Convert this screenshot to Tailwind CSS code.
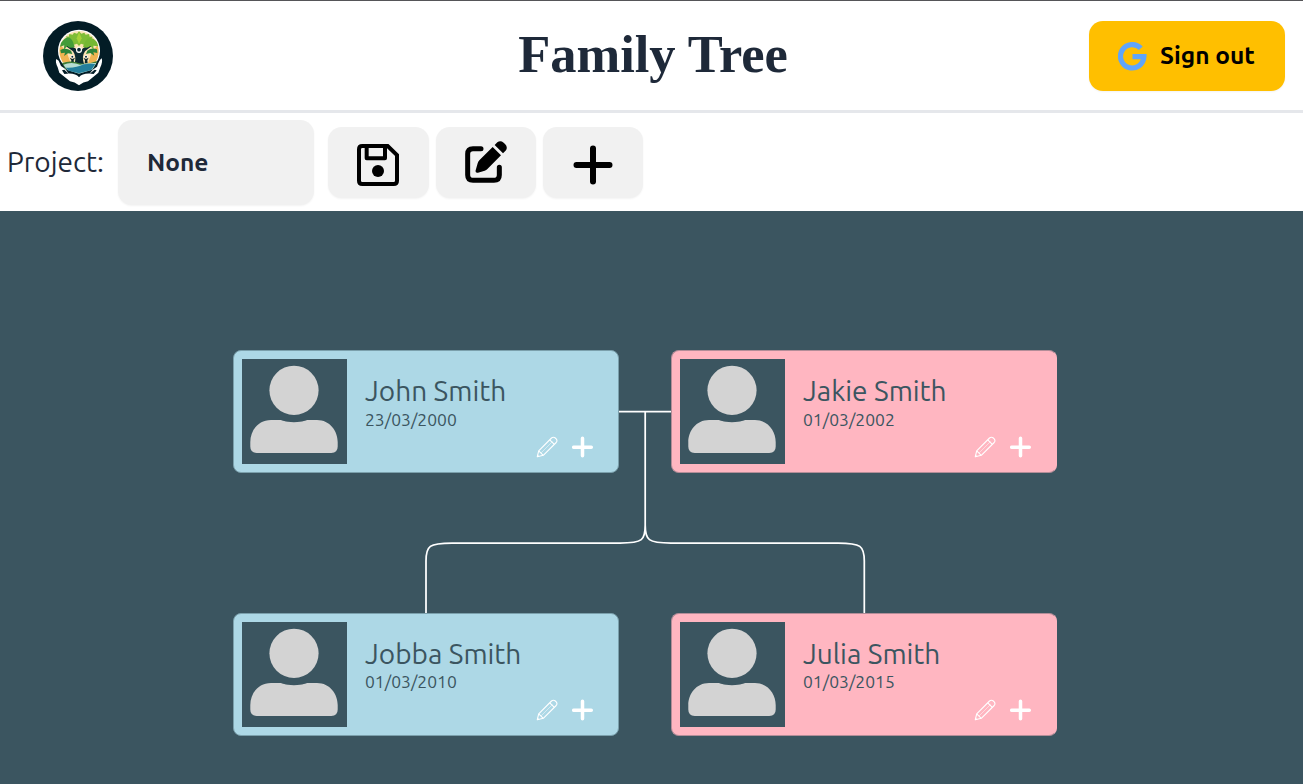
<!DOCTYPE html>
<html lang="en">
<head>
<meta charset="utf-8">
<title>Family Tree</title>
<script src="https://cdn.jsdelivr.net/npm/@tailwindcss/browser@4"></script>
</head>
<body class="flex h-screen flex-col overflow-hidden bg-white font-['Ubuntu','Open_Sans',sans-serif] text-gray-800">
<svg class="hidden">
  <symbol id="avatar" viewBox="0 0 105 105">
    <rect width="105" height="105" fill="#3b5560"/>
    <circle cx="52" cy="31.300" r="24.600" fill="#d3d3d3"/>
    <path d="M29 61h8c4 0 5 2.200 15 2.200S63 61 67 61h8C88 61 95.700 72 95.700 83v4.500q0 6.400-6.400 6.400H14.700q-6.400 0-6.400-6.400V83C8.300 72 16 61 29 61Z" fill="#d3d3d3"/>
  </symbol>
  <symbol id="pencil" viewBox="0 0 22 22">
    <g fill="none" stroke="#fff" stroke-width="1.100" stroke-linejoin="round">
      <path d="M1.300 20.700 2.700 14.800 15.500 2Q17.400 .4 19.300 2L20.200 2.900Q21.700 4.700 20.200 6.500L7.300 19.300Z"/>
      <path d="M2.700 14.800 7.300 19.300M13.700 3.800 18.400 8.400"/>
    </g>
    <path d="M5 17 16.500 5.500" stroke="#fff" stroke-width=".5"/>
    <path d="M.8 21.200 1.500 18.500 3.500 20.500Z" fill="#fff"/>
  </symbol>
  <symbol id="add" viewBox="0 0 22 22">
    <path d="M10.500 2.200v17.600M1.700 11.300h17.600" stroke="#fff" stroke-width="3.500" stroke-linecap="round"/>
  </symbol>
</svg>

<header class="flex h-[113px] shrink-0 items-center justify-between border-t border-b-3 border-t-[#555558] border-b-gray-200 pr-[18px] pl-[43px]">
  <div class="w-[192px]">
    <svg class="size-[70px]" viewBox="39 33 210 210">
      <circle cx="144" cy="138" r="105" fill="#031c26"/>
      <g transform="translate(54 42)">
        <circle cx="93" cy="80" r="63" fill="#fff"/>
        <circle cx="93" cy="80" r="59" fill="#fbe3b4"/>
        <path d="M37 63Q30 92 44 115L68 118 56 84ZM149 63Q157 92 143 115L120 118 132 84Z" fill="#f0b452"/>
        <path d="M80 120Q86 98 75 82L50 64 55 60 82 73 93 88 105 73 132 58 136 62 111 82Q100 98 108 120Z" fill="#0b2930"/>
        <path d="M54 37 62 38 64 30 74 32 78 26 87 29 93 22 100 29 109 26 113 32 123 30 125 38 134 38 127 49 116 53 108 62 99 59 93 66 87 59 78 62 71 53 60 49Z" fill="#7ebd36"/>
        <path d="M93 24 101 43 93 60 86 43Z" fill="#a7d23a"/>
        <path d="M39 57Q51 37 65 41 74 46 80 68 66 76 58 66L47 78 49 64 36 68Z" fill="#439c38"/>
        <path d="M147 55Q134 38 121 43 112 48 105 68 117 75 127 66L137 77 136 65 151 67Z" fill="#75b833"/>
        <path d="M37 78Q54 70 69 80L73 90 60 88 48 96 51 86 39 88ZM147 76Q131 69 118 80L114 90 127 87 139 95 136 85 148 87Z" fill="#2c843a"/>
        <circle cx="93" cy="78" r="9" fill="#fff"/><circle cx="93" cy="77" r="5.500" fill="#0b2930"/>
        <circle cx="73" cy="98" r="5" fill="#fff"/><circle cx="73" cy="98" r="3" fill="#0b2930"/>
        <circle cx="114" cy="98" r="5" fill="#fff"/><circle cx="114" cy="98" r="3" fill="#0b2930"/>
        <path d="M65 101 73 105 81 101 77 109 78 118H69L70 109ZM106 101 114 105 122 101 118 109 119 118H110L111 109Z" fill="#0b2930"/>
        <path d="M42 117Q70 107 94 118 118 122 148 111L137 132 93 148 52 135Z" fill="#3f7c36"/>
        <path d="M46 122Q70 112 96 122 119 116 145 117L133 137 93 149 58 138Z" fill="#b7ddd2"/>
        <path d="M53 131Q84 133 107 121 124 118 142 120L130 138 93 148 62 140Z" fill="#247f9c"/>
        <path d="M25 105Q21 113 29 130L34 146 66 172Q80 174 93 184 106 174 120 172L151 146 157 130Q165 113 161 103 153 109 147 128L134 137 124 150 140 137 146 139 137 150Q105 145 93 160 81 145 49 150L42 139 49 137 63 150 52 135 39 126 32 110Z" fill="#fff"/>
      </g>
    </svg>
  </div>
  <h1 class="pb-[2px] font-['Liberation_Serif',serif] text-[52.500px] leading-none font-bold whitespace-nowrap">Family Tree</h1>
  <div class="flex w-[214px] justify-end">
    <button class="flex h-[70px] w-[196px] items-center rounded-[14px] bg-[#ffbf00] pl-[29px] text-black shadow-xs">
      <svg class="mt-[2px] mr-[13px] size-[29px] shrink-0" viewBox="0 0 29 29"><path d="M22.800 6.300A11.700 11.700 0 1 0 25.900 14.700H14.500" fill="none" stroke="#60a5fa" stroke-width="5.200"/></svg>
      <span class="text-[24.500px] font-semibold whitespace-nowrap">Sign out</span>
    </button>
  </div>
</header>

<nav class="flex h-[98px] shrink-0 items-center gap-[7px] pt-px pl-[7px]">
  <span class="w-[104px] pb-[2px] text-[28px] font-normal whitespace-nowrap">Project:</span>
  <button class="mr-[7px] mb-px flex h-[85px] w-[196px] items-center rounded-[14px] bg-[#f1f1f1] pl-[29px] text-[24.500px] font-bold shadow-xs">None</button>
  <button class="flex h-[71px] w-[101px] items-center justify-center rounded-[14px] bg-[#f1f1f1] pt-[5px] pr-[2px] shadow-xs">
    <svg class="size-[42px]" viewBox="111 87 126 126" fill="none" stroke="#000" stroke-width="12">
      <path d="M127 93H203L231 120V197Q231 207 221 207H127Q117 207 117 197V103Q117 93 127 93Z"/>
      <path d="M140 93V130H195V93" stroke-linejoin="round"/><circle cx="174" cy="168" r="18" fill="#000" stroke="none"/>
    </svg>
  </button>
  <button class="flex h-[71px] w-[100px] items-center justify-center rounded-[14px] bg-[#f1f1f1] pb-px shadow-xs">
    <svg class="size-[42px]" viewBox="435 78 126 126">
      <path d="M483 101H459Q443 101 443 117V180Q443 196 459 196H522Q538 196 538 180V157" fill="none" stroke="#000" stroke-width="15" stroke-linecap="round"/>
      <path d="M518 96 543 121 503 161Q499 165 494 167L474 173Q465 175 467 166L473 145Q474 140 478 136ZM524 90 532 82Q541 75 551 83L555 87Q564 96 558 106L549 115Z"/>
    </svg>
  </button>
  <button class="flex h-[71px] w-[100px] items-center justify-center rounded-[14px] bg-[#f1f1f1] pt-[5px] shadow-xs">
    <svg class="size-[42px]" viewBox="0 0 42 42"><path d="M21 4.500v33M4.500 21h33" stroke="#000" stroke-width="6" stroke-linecap="round"/></svg>
  </button>
</nav>

<!-- Tree canvas: nodes are positioned freely over the connecting lines -->
<main class="relative min-h-0 flex-1 bg-[#3b5560] text-[#3b5560]">
  <svg class="absolute inset-0 size-full" viewBox="0 211 1303 573" fill="none" stroke="#fff" stroke-width="1.750">
    <path d="M618 411.500H672M645.200 411.500V525C645.200 540 643 543 620 543H452C429 543 426 546 426 561V614M645.200 525C645.200 540 648 543 671 543H838C861 543 864.300 546 864.300 561V614"/>
  </svg>

  <article class="absolute top-[139px] left-[233px] flex h-[123px] w-[386px] rounded-[8px] border border-[#7ba0ac] bg-[#add8e6] p-[8px]">
    <svg class="size-[105px] shrink-0"><use href="#avatar"/></svg>
    <div class="flex flex-1 flex-col pt-[14px] pl-[18px]">
      <h2 class="text-[28px] leading-[36px] font-normal whitespace-nowrap">John Smith</h2>
      <p class="text-[17.500px] leading-[22px] whitespace-nowrap">23/03/2000</p>
      <div class="mt-[5px] flex justify-end gap-[14px] pr-[16px]"><svg class="size-[22px]"><use href="#pencil"/></svg><svg class="size-[22px]"><use href="#add"/></svg></div>
    </div>
  </article>

  <article class="absolute top-[139px] left-[671px] flex h-[123px] w-[386px] rounded-[8px] border border-[#b38d98] border-r-[#ffb6c1] bg-[#ffb6c1] p-[8px]">
    <svg class="size-[105px] shrink-0"><use href="#avatar"/></svg>
    <div class="flex flex-1 flex-col pt-[14px] pl-[18px]">
      <h2 class="text-[28px] leading-[36px] font-normal whitespace-nowrap">Jakie Smith</h2>
      <p class="text-[17.500px] leading-[22px] whitespace-nowrap">01/03/2002</p>
      <div class="mt-[5px] flex justify-end gap-[14px] pr-[16px]"><svg class="size-[22px]"><use href="#pencil"/></svg><svg class="size-[22px]"><use href="#add"/></svg></div>
    </div>
  </article>

  <article class="absolute top-[402px] left-[233px] flex h-[123px] w-[386px] rounded-[8px] border border-[#7ba0ac] bg-[#add8e6] p-[8px]">
    <svg class="size-[105px] shrink-0"><use href="#avatar"/></svg>
    <div class="flex flex-1 flex-col pt-[14px] pl-[18px]">
      <h2 class="text-[28px] leading-[36px] font-normal whitespace-nowrap">Jobba Smith</h2>
      <p class="-mt-px text-[17.500px] leading-[22px] whitespace-nowrap">01/03/2010</p>
      <div class="mt-[6px] flex justify-end gap-[14px] pr-[16px]"><svg class="size-[22px]"><use href="#pencil"/></svg><svg class="size-[22px]"><use href="#add"/></svg></div>
    </div>
  </article>

  <article class="absolute top-[402px] left-[671px] flex h-[123px] w-[386px] rounded-[8px] border border-[#b38d98] border-r-[#ffb6c1] bg-[#ffb6c1] p-[8px]">
    <svg class="size-[105px] shrink-0"><use href="#avatar"/></svg>
    <div class="flex flex-1 flex-col pt-[14px] pl-[18px]">
      <h2 class="text-[28px] leading-[36px] font-normal whitespace-nowrap">Julia Smith</h2>
      <p class="-mt-px text-[17.500px] leading-[22px] whitespace-nowrap">01/03/2015</p>
      <div class="mt-[6px] flex justify-end gap-[14px] pr-[16px]"><svg class="size-[22px]"><use href="#pencil"/></svg><svg class="size-[22px]"><use href="#add"/></svg></div>
    </div>
  </article>
</main>
</body>
</html>
